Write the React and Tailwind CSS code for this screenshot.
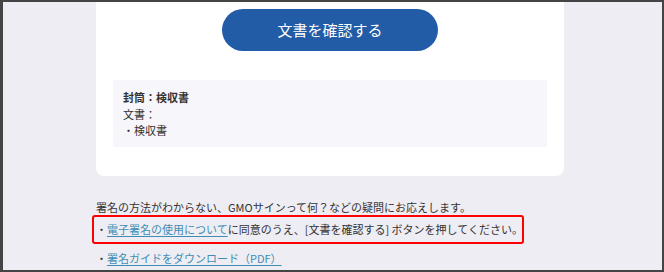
export default function App() {
  const font = { fontFamily: '"Noto Sans CJK JP", "Noto Sans", sans-serif' };
  return (
    <div
      className="w-[664px] h-[272px] overflow-hidden border-2 border-l-[3px] border-[#444444] bg-[#eeedf3] text-[#333333]"
      style={font}
    >
      <div className="ml-[93px] w-[468px] rounded-b-[8px] bg-white pt-[7px] pb-[29px]">
        <div className="flex justify-center">
          <button className="flex h-[42px] w-[216px] items-center justify-center rounded-full bg-[#235ca6] text-[15px] text-white">
            文書を確認する
          </button>
        </div>
        <div className="mx-[17px] mt-[29px] bg-[#f7f6fa] px-[10px] pt-[9px] pb-[8px] text-[11px] leading-[16.5px]">
          <div className="font-bold">封筒：検収書</div>
          <div>文書：</div>
          <div>・検収書</div>
        </div>
      </div>
      <div className="mt-[23px] text-[11px] leading-[16px] whitespace-nowrap">
        <div className="ml-[93px]">署名の方法がわからない、GMOサインって何？などの疑問にお応えします。</div>
        <div className="ml-[89px] h-[29px] w-[432px] rounded-[3px] border-2 border-[#ff0000] pl-[2px] leading-[25px]">
          ・<span className="text-[#3f8db3] underline underline-offset-2">電子署名の使用について</span>に同意のうえ、[文書を確認する] ボタンを押してください。
        </div>
        <div className="ml-[93px] mt-[6px]">
          ・<span className="text-[#3f8db3] underline underline-offset-2">署名ガイドをダウンロード（PDF）</span>
        </div>
      </div>
    </div>
  );
}
